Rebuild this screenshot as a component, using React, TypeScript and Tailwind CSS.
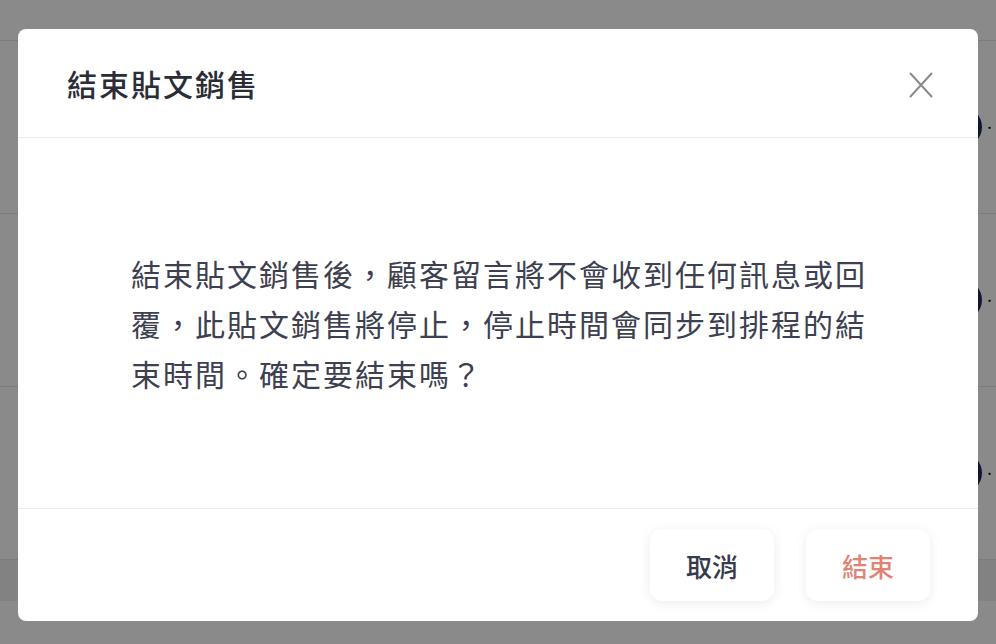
const rows = [0, 1, 2];

const CloseIcon = () => (
  <svg width="24" height="26" viewBox="0 0 24 26" fill="none">
    <path d="M1.5 1.5 L22.5 24.5 M22.5 1.5 L1.5 24.5" stroke="#8a8a8a" strokeWidth="2" strokeLinecap="round" />
  </svg>
);

const App = () => {
  return (
    <div
      className="relative h-[644px] w-[996px] overflow-hidden bg-white"
      style={{ fontFamily: '"Noto Sans CJK TC", "Noto Sans", sans-serif' }}
    >
      {/* Page underneath */}
      <div className="flex h-full flex-col">
        <div className="h-[41px] border-b border-[#e6e6e6] bg-white" />
        {rows.map((r) => (
          <div key={r} className="flex h-[173px] items-center justify-end gap-[2px] border-b border-[#e6e6e6] pr-[2px]">
            <div className="h-10 w-10 rounded-full bg-[#1f2d5c]" />
            <span className="w-[10px] text-[11px] text-black">·</span>
          </div>
        ))}
        <div className="h-[41px] bg-[#f1f1f1]" />
        <div className="flex-1 bg-white" />
      </div>

      {/* Dialog */}
      <div className="absolute inset-0 flex items-start justify-center bg-black/[0.46] pt-[29px]">
        <div className="w-[960px] overflow-hidden rounded-lg bg-white">
          <header className="flex h-[109px] items-center justify-between border-b border-[#ebebeb] pl-[49px] pr-[41px]">
            <h2 className="text-[30px] font-medium tracking-[2px] text-[#2a2d36]">結束貼文銷售</h2>
            <button className="flex h-8 w-8 items-center justify-center pt-1">
              <CloseIcon />
            </button>
          </header>

          <div className="flex h-[370px] items-center pl-[113px] pr-[96px]">
            <p className="text-[30px] leading-[50px] tracking-[2px] text-[#3c4050]">
              結束貼文銷售後，顧客留言將不會收到任何訊息或回覆，此貼文銷售將停止，停止時間會同步到排程的結束時間。確定要結束嗎？
            </p>
          </div>

          <footer className="flex h-[113px] items-center justify-end gap-8 border-t border-[#ebebeb] pr-12">
            <button className="h-[72px] w-[124px] rounded-xl bg-white text-[26px] font-medium text-[#363b4c] shadow-[0_2px_12px_rgba(0,0,0,0.08)]">
              取消
            </button>
            <button className="h-[72px] w-[124px] rounded-xl bg-white text-[26px] font-medium text-[#df8474] shadow-[0_2px_12px_rgba(0,0,0,0.08)]">
              結束
            </button>
          </footer>
        </div>
      </div>
    </div>
  );
};

export default App;
